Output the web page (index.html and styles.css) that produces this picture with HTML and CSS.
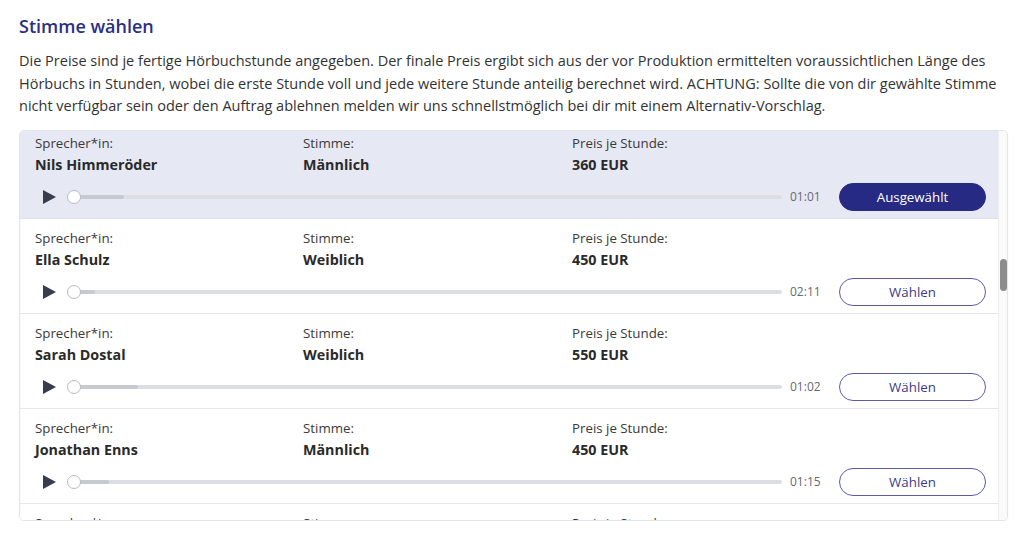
FILE: index.html
```html
<!DOCTYPE html>
<html lang="de">
<head>
<meta charset="utf-8">
<title>Stimme wählen</title>
<link rel="stylesheet" href="styles.css">
</head>
<body>
<main class="page">
  <h2 class="title">Stimme wählen</h2>
  <p class="intro">Die Preise sind je fertige Hörbuchstunde angegeben. Der finale Preis ergibt sich aus der vor Produktion ermittelten voraussichtlichen Länge des Hörbuchs in Stunden, wobei die erste Stunde voll und jede weitere Stunde anteilig berechnet wird. ACHTUNG: Sollte die von dir gewählte Stimme nicht verfügbar sein oder den Auftrag ablehnen melden wir uns schnellstmöglich bei dir mit einem Alternativ-Vorschlag.</p>

  <section class="voices">
    <div class="list">
      <div class="list-inner">
        <article class="voice selected">
          <div class="info">
            <div class="field"><span class="label">Sprecher*in:</span><span class="value">Nils Himmeröder</span></div>
            <div class="field"><span class="label">Stimme:</span><span class="value">Männlich</span></div>
            <div class="field"><span class="label">Preis je Stunde:</span><span class="value">360 EUR</span></div>
          </div>
          <div class="player">
            <span class="play"></span>
            <div class="track"><span class="buffer" style="width:7%"></span><span class="knob"></span></div>
            <span class="time">01:01</span>
            <button class="choose active">Ausgewählt</button>
          </div>
        </article>

        <article class="voice">
          <div class="info">
            <div class="field"><span class="label">Sprecher*in:</span><span class="value">Ella Schulz</span></div>
            <div class="field"><span class="label">Stimme:</span><span class="value">Weiblich</span></div>
            <div class="field"><span class="label">Preis je Stunde:</span><span class="value">450 EUR</span></div>
          </div>
          <div class="player">
            <span class="play"></span>
            <div class="track"><span class="buffer" style="width:3%"></span><span class="knob"></span></div>
            <span class="time">02:11</span>
            <button class="choose">Wählen</button>
          </div>
        </article>

        <article class="voice">
          <div class="info">
            <div class="field"><span class="label">Sprecher*in:</span><span class="value">Sarah Dostal</span></div>
            <div class="field"><span class="label">Stimme:</span><span class="value">Weiblich</span></div>
            <div class="field"><span class="label">Preis je Stunde:</span><span class="value">550 EUR</span></div>
          </div>
          <div class="player">
            <span class="play"></span>
            <div class="track"><span class="buffer" style="width:9%"></span><span class="knob"></span></div>
            <span class="time">01:02</span>
            <button class="choose">Wählen</button>
          </div>
        </article>

        <article class="voice">
          <div class="info">
            <div class="field"><span class="label">Sprecher*in:</span><span class="value">Jonathan Enns</span></div>
            <div class="field"><span class="label">Stimme:</span><span class="value">Männlich</span></div>
            <div class="field"><span class="label">Preis je Stunde:</span><span class="value">450 EUR</span></div>
          </div>
          <div class="player">
            <span class="play"></span>
            <div class="track"><span class="buffer" style="width:5%"></span><span class="knob"></span></div>
            <span class="time">01:15</span>
            <button class="choose">Wählen</button>
          </div>
        </article>

        <article class="voice">
          <div class="info">
            <div class="field"><span class="label">Sprecher*in:</span><span class="value">Maria Lenz</span></div>
            <div class="field"><span class="label">Stimme:</span><span class="value">Weiblich</span></div>
            <div class="field"><span class="label">Preis je Stunde:</span><span class="value">400 EUR</span></div>
          </div>
          <div class="player">
            <span class="play"></span>
            <div class="track"><span class="buffer" style="width:4%"></span><span class="knob"></span></div>
            <span class="time">01:20</span>
            <button class="choose">Wählen</button>
          </div>
        </article>
      </div>
    </div>
    <div class="scrollbar"><span class="thumb"></span></div>
  </section>
</main>
</body>
</html>
```

FILE: styles.css
```css
* { box-sizing: border-box; }

html, body {
  margin: 0;
  background: #ffffff;
}

body {
  font-family: "Open Sans", "Noto Sans", "Liberation Sans", sans-serif;
  color: #333333;
}

.page {
  padding: 14px 16px 0 19px;
}

.title {
  margin: 0;
  font-size: 18px;
  line-height: 24px;
  font-weight: 600;
  color: #2b2f85;
}

.intro {
  margin: 12px 0 12px;
  font-size: 14.5px;
  line-height: 22.5px;
  color: #333333;
}

.voices {
  display: flex;
  height: 391px;
  width: 989px;
  border: 1px solid #e3e4ea;
  border-radius: 5px;
  overflow: hidden;
  box-shadow: 0 1px 2px rgba(0, 0, 0, 0.06);
}

.list {
  flex: 1;
  overflow: hidden;
}

.list-inner {
  margin-top: -7px;
}

.voice {
  padding: 10px 12px 7px 15px;
  border-bottom: 1px solid #e6e7ec;
  background: #ffffff;
}

.voice.selected {
  background: #e6e8f3;
  border-bottom-color: #dcdff0;
}

.info {
  display: grid;
  grid-template-columns: 268px 269px 1fr;
}

.field {
  display: flex;
  flex-direction: column;
}

.label {
  font-size: 13.3px;
  line-height: 18px;
  color: #3a3a3a;
}

.value {
  margin-top: 2px;
  font-size: 14.3px;
  line-height: 22px;
  font-weight: 700;
  color: #2a2a2a;
}

.player {
  display: flex;
  align-items: center;
  height: 28px;
  margin-top: 7px;
}

.play {
  width: 0;
  height: 0;
  margin-left: 8px;
  border-top: 7.5px solid transparent;
  border-bottom: 7.5px solid transparent;
  border-left: 13px solid #383d4d;
}

.track {
  position: relative;
  flex: 1;
  height: 4px;
  margin-left: 18px;
  background: #dcdee3;
  border-radius: 2px;
}

.buffer {
  display: block;
  height: 100%;
  background: #c5c9d1;
  border-radius: 2px;
}

.knob {
  position: absolute;
  left: -7px;
  top: -5px;
  width: 14px;
  height: 14px;
  border-radius: 50%;
  background: #ffffff;
  border: 1px solid #b8bbc3;
}

.time {
  width: 57px;
  padding-left: 8px;
  font-size: 12px;
  color: #666a70;
}

.choose {
  width: 147px;
  height: 28px;
  border-radius: 14px;
  border: 1px solid #5b5ca8;
  background: #ffffff;
  color: #3b3c8c;
  font-family: "Open Sans", "Noto Sans", "Liberation Sans", sans-serif;
  font-size: 13.3px;
  padding: 0;
  cursor: pointer;
}

.choose.active {
  background: #272a82;
  border-color: #272a82;
  color: #ffffff;
}

.scrollbar {
  width: 9px;
  background: #fafafa;
  border-left: 1px solid #eeeeee;
  display: flex;
  justify-content: center;
}

.thumb {
  display: block;
  width: 7px;
  height: 32px;
  margin-top: 128px;
  border-radius: 4px;
  background: #8c8c8c;
}
```
